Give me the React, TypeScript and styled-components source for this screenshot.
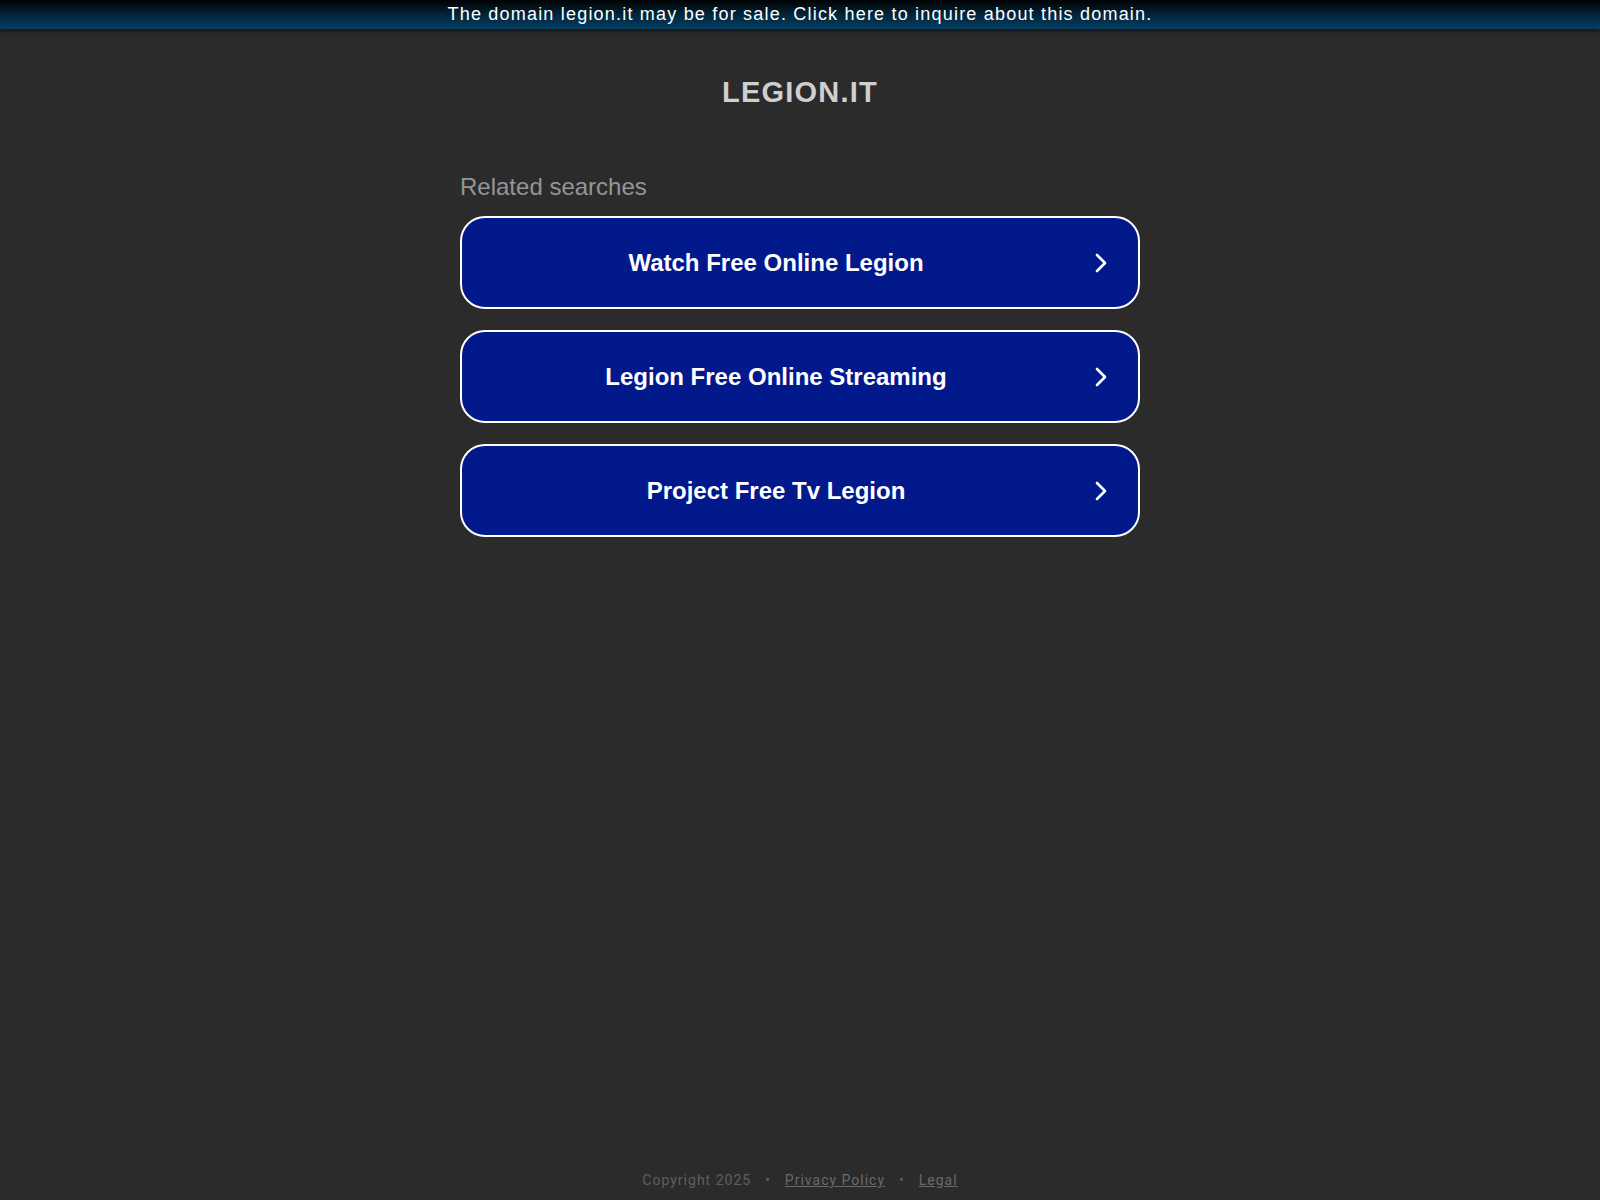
import styled, { createGlobalStyle } from "styled-components";

const GlobalStyle = createGlobalStyle`
  html, body {
    margin: 0;
    padding: 0;
    background: #2b2b2b;
  }
  * {
    box-sizing: border-box;
  }
`;

const Page = styled.div`
  min-height: 100vh;
  display: flex;
  flex-direction: column;
  font-family: "Liberation Sans", Arial, sans-serif;
`;

const SaleBanner = styled.a`
  display: block;
  height: 29px;
  line-height: 28px;
  text-align: center;
  color: #ffffff;
  font-size: 18px;
  letter-spacing: 1.2px;
  text-decoration: none;
  background: linear-gradient(to bottom, #000000 0%, #02283f 55%, #033e62 100%);
  box-shadow: 0 2px 4px rgba(0, 0, 0, 0.6);
`;

const Main = styled.main`
  flex: 1;
  width: 680px;
  margin: 0 auto;
  display: flex;
  flex-direction: column;
`;

const DomainTitle = styled.h1`
  margin: 46px 0 0;
  text-align: center;
  color: #cfcfcf;
  font-size: 29px;
  font-weight: bold;
  letter-spacing: 1.2px;
  line-height: 34px;
`;

const SectionLabel = styled.p`
  margin: 64px 0 0;
  color: #959595;
  font-size: 24px;
  line-height: 28px;
`;

const SearchList = styled.div`
  margin-top: 15px;
  display: flex;
  flex-direction: column;
  gap: 21px;
`;

const SearchButton = styled.a`
  height: 93px;
  display: flex;
  align-items: center;
  background: #02198b;
  border: 2px solid #ffffff;
  border-radius: 25px;
  color: #ffffff;
  text-decoration: none;
  padding: 0 30px 0 0;
`;

const SearchText = styled.span`
  flex: 1;
  text-align: center;
  font-size: 24px;
  font-weight: bold;
  padding-right: 4px;
`;

const Chevron = styled.svg`
  width: 14px;
  height: 22px;
  flex: none;
`;

const Footer = styled.footer`
  padding: 0 0 10px;
  text-align: center;
  font-family: Roboto, "Liberation Sans", sans-serif;
  font-size: 14px;
  letter-spacing: 1px;
  color: #5f5f5f;
  line-height: 20px;
`;

const FooterLink = styled.a`
  color: #6a6a6a;
  text-decoration: underline;
`;

const Dot = styled.span`
  margin: 0 14px;
`;

const searches = [
  "Watch Free Online Legion",
  "Legion Free Online Streaming",
  "Project Free Tv Legion",
];

const App = () => {
  return (
    <>
      <GlobalStyle />
      <Page>
        <SaleBanner href="#">
          The domain legion.it may be for sale. Click here to inquire about this domain.
        </SaleBanner>
        <Main>
          <DomainTitle>LEGION.IT</DomainTitle>
          <SectionLabel>Related searches</SectionLabel>
          <SearchList>
            {searches.map((s) => (
              <SearchButton href="#" key={s}>
                <SearchText>{s}</SearchText>
                <Chevron viewBox="0 0 14 22">
                  <path
                    d="M3 3 L11 11 L3 19"
                    fill="none"
                    stroke="#ffffff"
                    strokeWidth="2.6"
                    strokeLinecap="round"
                    strokeLinejoin="round"
                  />
                </Chevron>
              </SearchButton>
            ))}
          </SearchList>
        </Main>
        <Footer>
          Copyright 2025<Dot>•</Dot>
          <FooterLink href="#">Privacy Policy</FooterLink>
          <Dot>•</Dot>
          <FooterLink href="#">Legal</FooterLink>
        </Footer>
      </Page>
    </>
  );
};

export default App;
